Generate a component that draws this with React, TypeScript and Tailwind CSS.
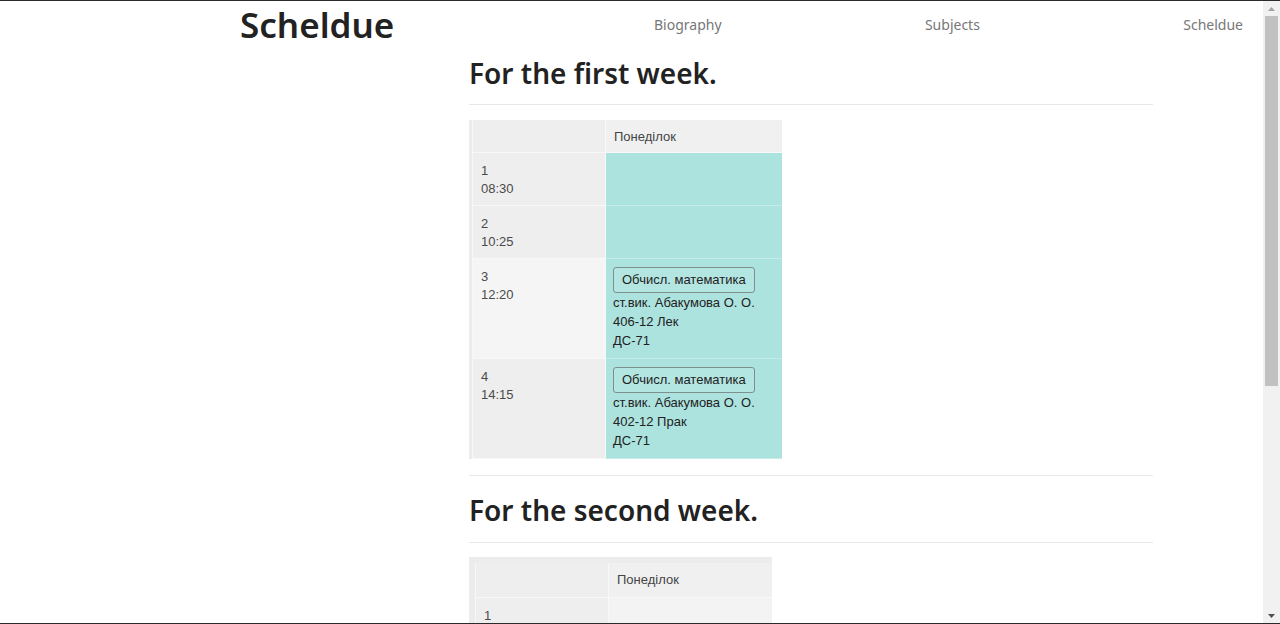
import React from "react";

type Lesson = {
    subject: string;
    teacher: string;
    room: string;
    group: string;
};

type Row = {
    num: string;
    time: string;
    lesson?: Lesson;
};

const firstWeek: Row[] = [
    { num: "1", time: "08:30" },
    { num: "2", time: "10:25" },
    {
        num: "3",
        time: "12:20",
        lesson: { subject: "Обчисл. математика", teacher: "ст.вик. Абакумова О. О.", room: "406-12 Лек", group: "ДС-71" },
    },
    {
        num: "4",
        time: "14:15",
        lesson: { subject: "Обчисл. математика", teacher: "ст.вик. Абакумова О. О.", room: "402-12 Прак", group: "ДС-71" },
    },
];

// only the top of the second week fits in the window
const secondWeek: Row[] = [{ num: "1", time: "" }];

const sans = "font-['Noto_Sans','Open_Sans',sans-serif]";
const arial = "font-['Liberation_Sans',Arial,sans-serif]";

const NavBar = () => {
    return (
        <header className="flex items-center h-[47px] pl-[240px] pr-[20px]">
            <div className={`w-[414px] text-[35px] leading-[47px] font-semibold text-[#222] ${sans}`}>Scheldue</div>
            <nav className={`flex-1 flex justify-between text-[14px] text-[#777] ${sans}`}>
                <span>Biography</span>
                <span>Subjects</span>
                <span>Scheldue</span>
            </nav>
        </header>
    );
};

const LessonCell = ({ lesson }: { lesson?: Lesson }) => {
    if (!lesson) return null;
    return (
        <div className="flex flex-col items-start leading-[19px]">
            <span className="border border-[#7d908e] rounded-[3px] bg-[#b4e6e1] px-[8px] py-[3px] leading-[18px]">
                {lesson.subject}
            </span>
            <span>{lesson.teacher}</span>
            <span>{lesson.room}</span>
            <span>{lesson.group}</span>
        </div>
    );
};

const Schedule = ({ rows, narrow }: { rows: Row[]; narrow?: boolean }) => {
    return (
        <div
            className={`${narrow ? "w-[303px] pl-[6px] pt-[6px]" : "w-[313px] pl-[3px]"} bg-[#ececec] text-[13px] leading-[18px] ${arial}`}
        >
            <div className="flex border-l border-[#f7f7f7]">
                <div className={`w-[133px] shrink-0 bg-[#eeeeee] border-r border-b border-[#f8f8f8] ${narrow ? "h-[35px]" : "h-[33px]"}`} />
                <div
                    className={`flex-1 bg-[#f0f0f0] border-b border-[#f8f8f8] pt-[8px] px-[8px] text-[#444] ${narrow ? "h-[35px]" : "h-[33px]"}`}
                >
                    Понеділок
                </div>
            </div>
            {rows.map((row, i) => (
                <div key={row.num} className="flex border-l border-[#f7f7f7]">
                    <div
                        className={`w-[133px] shrink-0 ${i === 2 ? "bg-[#f5f5f5]" : "bg-[#eeeeee]"} border-r border-b border-[#f8f8f8] pt-[9px] pb-[7px] px-[8px] text-[#4a4a4a]`}
                    >
                        <div>{row.num}</div>
                        <div>{row.time}</div>
                    </div>
                    <div
                        className={`flex-1 ${narrow ? "bg-[#f3f3f3] border-[#f8f8f8]" : "bg-[#ade3de] border-[#c5ece8]"} border-b pt-[8px] pb-[8px] px-[7px] text-[#222]`}
                    >
                        <LessonCell lesson={row.lesson} />
                    </div>
                </div>
            ))}
        </div>
    );
};

const Scrollbar = () => {
    return (
        <div className="w-[17px] shrink-0 bg-[#f1f1f1] flex flex-col items-center">
            <div className="h-[15px] flex items-center justify-center">
                <svg width="7" height="4" viewBox="0 0 7 4"><path d="M3.5 0 L7 4 L0 4 Z" fill="#a3a3a3" /></svg>
            </div>
            <div className="w-[13px] h-[370px] bg-[#c1c1c1]" />
            <div className="flex-1" />
            <div className="h-[15px] flex items-center justify-center">
                <svg width="7" height="4" viewBox="0 0 7 4"><path d="M0 0 L7 0 L3.5 4 Z" fill="#505050" /></svg>
            </div>
        </div>
    );
};

const App = () => {
    return (
        <div className="h-[624px] flex flex-col border-y border-[#2b2b2b] bg-white overflow-hidden">
            <div className="flex flex-1 min-h-0">
                <div className="flex-1 overflow-hidden">
                    <NavBar />

                    <main className="ml-[469px] w-[684px]">
                        {/* first week */}
                        <h2 className={`mt-[5px] text-[28px] leading-[40px] font-semibold text-[#222] ${sans}`}>For the first week.</h2>
                        <hr className="mt-[11px] border-t border-[#e8e8e8]" />
                        <div className="mt-[15px]">
                            <Schedule rows={firstWeek} />
                        </div>

                        <hr className="mt-[16px] border-t border-[#e8e8e8]" />

                        {/* second week */}
                        <h2 className={`mt-[14px] text-[28px] leading-[40px] font-semibold text-[#222] ${sans}`}>For the second week.</h2>
                        <hr className="mt-[12px] border-t border-[#e8e8e8]" />
                        <div className="mt-[14px]">
                            <Schedule rows={secondWeek} narrow />
                        </div>
                    </main>
                </div>
                <Scrollbar />
            </div>
        </div>
    );
};

export default App;
